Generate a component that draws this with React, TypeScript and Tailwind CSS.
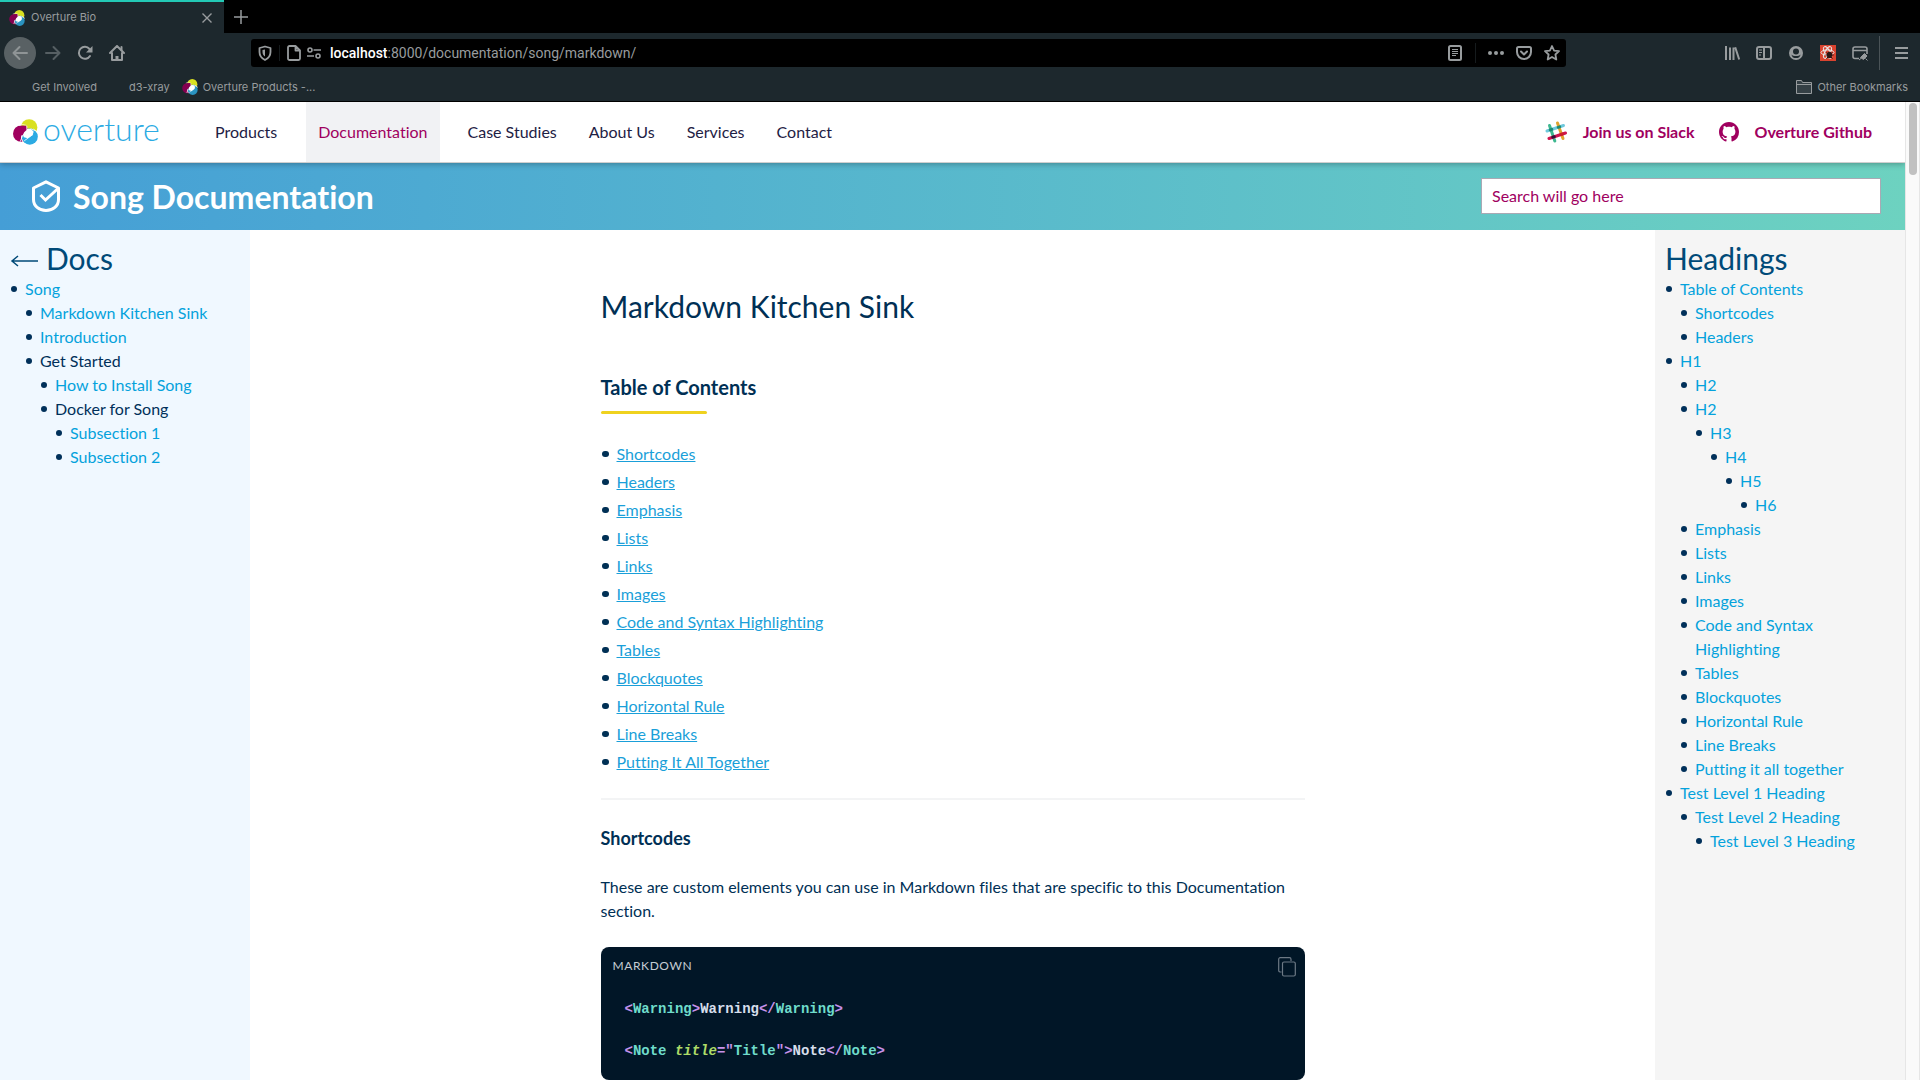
import React from "react";

type Node = { label: string; link?: boolean; children?: Node[] };

const docsTree: Node[] = [
  {
    label: "Song",
    link: true,
    children: [
      { label: "Markdown Kitchen Sink", link: true },
      { label: "Introduction", link: true },
      {
        label: "Get Started",
        children: [
          { label: "How to Install Song", link: true },
          {
            label: "Docker for Song",
            children: [
              { label: "Subsection 1", link: true },
              { label: "Subsection 2", link: true },
            ],
          },
        ],
      },
    ],
  },
];

const leaf = (label: string): Node => ({ label, link: true });
const branch = (label: string, children: Node[]): Node => ({ label, link: true, children });

const headingsTree: Node[] = [
  branch("Table of Contents", [leaf("Shortcodes"), leaf("Headers")]),
  branch("H1", [
    leaf("H2"),
    branch("H2", [branch("H3", [branch("H4", [branch("H5", [leaf("H6")])])])]),
    leaf("Emphasis"),
    leaf("Lists"),
    leaf("Links"),
    leaf("Images"),
    leaf("Code and Syntax Highlighting"),
    leaf("Tables"),
    leaf("Blockquotes"),
    leaf("Horizontal Rule"),
    leaf("Line Breaks"),
    leaf("Putting it all together"),
  ]),
  branch("Test Level 1 Heading", [branch("Test Level 2 Heading", [leaf("Test Level 3 Heading")])]),
];

const contents = [
  "Shortcodes",
  "Headers",
  "Emphasis",
  "Lists",
  "Links",
  "Images",
  "Code and Syntax Highlighting",
  "Tables",
  "Blockquotes",
  "Horizontal Rule",
  "Line Breaks",
  "Putting It All Together",
];

function Tree({ nodes }: { nodes: Node[] }) {
  return (
    <ul className="text-base leading-6">
      {nodes.map((n, i) => (
        <li
          key={i}
          className="flex before:mt-[9px] before:mr-2 before:ml-px before:h-1.5 before:w-1.5 before:shrink-0 before:rounded-full before:bg-[#00305a]"
        >
          <div>
            {n.link ? (
              <a href="#" className="text-[#04a2dc]">
                {n.label}
              </a>
            ) : (
              n.label
            )}
            {n.children && <Tree nodes={n.children} />}
          </div>
        </li>
      ))}
    </ul>
  );
}

function OvertureMark({ className, dim }: { className: string; dim?: boolean }) {
  const blue = dim ? "#2a93c0" : "#2cabe3";
  const red = dim ? "#85004f" : "#a0005f";
  return (
    <svg viewBox="0 0 76 78" className={className} aria-hidden="true">
      <circle cx="49" cy="25" r="25" fill="#d9e021" />
      <circle cx="25" cy="44" r="25" fill={red} />
      <circle cx="51" cy="53" r="24.500" fill={blue} />
      <path d="M41 19 A27 27 0 0 0 18 19" stroke="#fff" strokeWidth="2" fill="none" />
      <path d="M30 69 A26 26 0 0 1 27 46" stroke="#fff" strokeWidth="3" fill="none" />
      <path d="M62 30 A26 26 0 0 1 76 44" stroke="#fff" strokeWidth="2" fill="none" />
      <path d="M36 30 L54 29 L63 38 L59 49 L45 58 L33 55 L29 44 Z" fill="#fff" />
      <path d="M41 20 L42 32 L34 40 L28 52 L20 42 L30 20 Z" fill={red} />
      <path d="M42 20 L42 32 M30 48 L22 68 M34 66 L61 46 M54 29 L74 38" stroke="#fff" strokeWidth="2.500" fill="none" />
    </svg>
  );
}

function Chrome() {
  return (
    <header className="shrink-0 border-b border-black bg-[#1d282d] font-['Inter',sans-serif] text-[#989c9e]">
      <div className="flex h-[33px] bg-black">
        <div className="flex w-56 items-center gap-1.5 border-t-2 border-[#23c9b5] bg-[#1d282d] px-[9px] text-[11px]">
          <OvertureMark className="h-4 w-4" dim />
          <span className="flex-1">Overture Bio</span>
          <button aria-label="Close tab" className="mr-[3px]">
            <svg viewBox="0 0 10 10" className="h-2.5 w-2.5" stroke="currentColor" strokeWidth="1.4">
              <path d="M0.5 0.5 9.5 9.5M9.5 0.5 0.5 9.5" />
            </svg>
          </button>
        </div>
        <button aria-label="New tab" className="ml-2.5 flex items-center">
          <svg viewBox="0 0 14 14" className="h-3.5 w-3.5" stroke="currentColor" strokeWidth="1.5">
            <path d="M7 0v14M0 7h14" />
          </svg>
        </button>
      </div>

      <div className="flex h-10 items-center">
        <div className="flex w-[251px] items-center pl-1">
          <button aria-label="Back" className="flex h-8 w-8 items-center justify-center rounded-full bg-[#596164] text-[#8f9496]">
            <svg viewBox="0 0 16 16" className="h-4 w-4" fill="none" stroke="currentColor" strokeWidth="2" strokeLinecap="round" strokeLinejoin="round">
              <path d="M15 8H1.5M7.5 2 1.5 8l6 6" />
            </svg>
          </button>
          <button aria-label="Forward" className="ml-[9px] text-[#565f63]">
            <svg viewBox="0 0 16 16" className="h-4 w-4" fill="none" stroke="currentColor" strokeWidth="2" strokeLinecap="round" strokeLinejoin="round">
              <path d="M1 8h13.5M8.500 2l6 6-6 6" />
            </svg>
          </button>
          <button aria-label="Reload" className="ml-4">
            <svg viewBox="0 0 16 16" className="h-4 w-4" fill="none" stroke="currentColor" strokeWidth="2">
              <path d="M13 11A6 6 0 1 1 12.500 4" strokeLinecap="round" />
              <path d="M15.500 1v6.500H9z" fill="currentColor" stroke="none" />
            </svg>
          </button>
          <button aria-label="Home" className="ml-4">
            <svg viewBox="0 0 16 16" className="h-4 w-4" fill="none" stroke="currentColor" strokeWidth="2" strokeLinecap="round" strokeLinejoin="round">
              <path d="M1 8 8 1l7 7M3 8v7h10V8" />
              <path d="M8 15v-4" strokeWidth="3" strokeLinecap="butt" />
              <path d="M12.500 2v3" />
            </svg>
          </button>
        </div>

        <div className="flex h-7 w-[1315px] items-center rounded-[3px] bg-black">
          <button aria-label="Tracking protection" className="ml-1 flex w-[25px] justify-center border-r border-[#161b1d] pr-1">
            <svg viewBox="0 0 16 16" className="h-4 w-4 shrink-0" fill="none" stroke="currentColor" strokeWidth="1.800" strokeLinejoin="round">
              <path d="M8 1.500 13.500 3v4c0 4-2.500 6.500-5.500 8C5 13.500 2.500 11 2.500 7V3z" />
              <path d="M8 4.500v7C6.500 10.500 5.500 9 5.500 7V5z" fill="currentColor" stroke="none" />
            </svg>
          </button>
          <svg viewBox="0 0 14 16" className="ml-[7px] h-4 w-3.5" fill="none" stroke="currentColor" strokeWidth="1.800" strokeLinejoin="round">
            <path d="M2.500 1h6L13 5.500v8A1.500 1.500 0 0 1 11.500 15h-9A1.500 1.500 0 0 1 1 13.500v-11A1.500 1.500 0 0 1 2.500 1zM8.500 1v4.500H13" />
          </svg>
          <svg viewBox="0 0 14 12" className="ml-1.5 h-3 w-3.5" fill="none" stroke="currentColor" strokeWidth="1.600">
            <circle cx="3" cy="3" r="2" />
            <circle cx="11" cy="9" r="2" />
            <path d="M6.500 3H14M0 9h7" />
          </svg>
          <div className="ml-[9px] flex-1 pt-px font-['Roboto',sans-serif] text-[14px]">
            <span className="font-medium text-white">localhost</span>:8000/documentation/song/markdown/
          </div>
          <button aria-label="Reader view">
            <svg viewBox="0 0 14 16" className="h-4 w-3.5" fill="none" stroke="currentColor">
              <rect x="1" y="1" width="12" height="14" rx="1.500" strokeWidth="2" />
              <path d="M4 4.500h6M4 6.500h6M4 8.500h6M4 10.500h4" />
            </svg>
          </button>
          <span className="ml-[13px] h-5 w-px bg-[#161b1d]" />
          <button aria-label="Page actions" className="ml-3">
            <svg viewBox="0 0 16 4" className="h-1 w-4" fill="currentColor">
              <circle cx="2" cy="2" r="2" />
              <circle cx="8" cy="2" r="2" />
              <circle cx="14" cy="2" r="2" />
            </svg>
          </button>
          <button aria-label="Save to Pocket" className="ml-3">
            <svg viewBox="0 0 16 16" className="h-4 w-4" fill="none" stroke="currentColor" strokeWidth="2" strokeLinecap="round" strokeLinejoin="round">
              <path d="M2.500 2h11A1.500 1.500 0 0 1 15 3.500V7A7 7 0 0 1 1 7V3.500A1.500 1.500 0 0 1 2.500 2z" />
              <path d="M5 6.500l3 3 3-3" />
            </svg>
          </button>
          <button aria-label="Bookmark this page" className="mr-1.5 ml-3">
            <svg viewBox="0 0 16 16" className="h-4 w-4" fill="none" stroke="currentColor" strokeWidth="1.800" strokeLinejoin="round">
              <path d="M8 1l2.100 4.600 4.900.6-3.600 3.300.9 5L8 12 3.700 14.500l.9-5L1 6.200l4.900-.6z" />
            </svg>
          </button>
        </div>

        <div className="flex flex-1 items-center justify-end gap-4 pr-3">
          <button aria-label="Library">
            <svg viewBox="0 0 16 16" className="h-4 w-4" fill="none" stroke="currentColor" strokeWidth="2">
              <path d="M2 1v14M6 2.500v12.500M9.500 2.500v12.500M11.200 2.200l4 12.300" />
            </svg>
          </button>
          <button aria-label="Sidebars">
            <svg viewBox="0 0 16 16" className="h-4 w-4" fill="none" stroke="currentColor" strokeWidth="2">
              <rect x="1" y="2" width="14" height="12" rx="2" />
              <path d="M8 2v12" />
              <path d="M3 5h3M3 7.500h3M3 10h2" strokeWidth="1" />
            </svg>
          </button>
          <button aria-label="Account">
            <svg viewBox="0 0 16 16" className="h-4 w-4">
              <circle cx="8" cy="8" r="7" fill="currentColor" />
              <circle cx="8" cy="6.500" r="3" fill="#1d282d" />
              <path d="M3.500 9.500C5 11.500 11 11.500 12.500 9.500 12 12.500 10 13 8 13s-4-.5-4.500-3.500z" fill="#1d282d" />
            </svg>
          </button>
          <button aria-label="React developer tools">
            <svg viewBox="0 0 16 16" className="h-4 w-4" fill="none">
              <path d="M0 0h16v16H0z" fill="#d9432f" />
              <g stroke="#e8e8e8" strokeWidth="1">
                <ellipse cx="7.500" cy="7.500" rx="6.500" ry="2.600" />
                <ellipse cx="7.500" cy="7.500" rx="6.500" ry="2.600" transform="rotate(60 7.500 7.500)" />
                <ellipse cx="7.500" cy="7.500" rx="6.500" ry="2.600" transform="rotate(120 7.500 7.500)" />
              </g>
              <ellipse cx="9.500" cy="10" rx="2.600" ry="3.200" fill="#2a1512" />
              <path d="M5.500 10h8M6.500 13.500l6-6M6.500 7.500l6 6" stroke="#2a1512" />
            </svg>
          </button>
          <button aria-label="Accessibility tools">
            <svg viewBox="0 0 16 16" className="h-4 w-4" fill="none" stroke="currentColor" strokeWidth="1.600">
              <path d="M7 13.500H3A2 2 0 0 1 1 11.500V4a2 2 0 0 1 2-2h10a2 2 0 0 1 2 2v5M1 5.500h14" />
              <path d="M8.500 12.500 12.500 8.500 15 11l-3.500 3.500zM7 15l2.500-2M13.500 13.500 15.500 15.500" fill="currentColor" strokeWidth="1" />
            </svg>
          </button>
          <button aria-label="Open menu" className="-ml-[5px] flex h-[34px] items-center border-l border-[#4a5357] pl-[15px]">
            <svg viewBox="0 0 13 12" className="h-3 w-[13px]" stroke="currentColor" strokeWidth="2">
              <path d="M0 1h13M0 6h13M0 11h13" />
            </svg>
          </button>
        </div>
      </div>

      <nav className="flex h-7 items-center pr-3 pl-8 text-[11px]" aria-label="Bookmarks">
        <a href="#">Get Involved</a>
        <a href="#" className="ml-8">d3-xray</a>
        <a href="#" className="ml-3 flex items-center gap-[5px]">
          <OvertureMark className="h-4 w-4" dim />
          Overture Products -...
        </a>
        <a href="#" className="ml-auto flex items-center gap-[5px]">
          <svg viewBox="0 0 16 14" className="h-3.5 w-4" fill="#354045" stroke="currentColor">
            <path d="M.5 13.500V.5h5l1 2h9v11zM.5 4.500h15" />
          </svg>
          Other Bookmarks
        </a>
      </nav>
    </header>
  );
}

function SlackMark() {
  return (
    <svg viewBox="0 0 22 22" className="h-[22px] w-[22px]" fill="none" strokeWidth="3" strokeLinecap="round" aria-hidden="true">
      <path d="M2 10 18.500 4.500" stroke="#6fc9dc" />
      <path d="M12.500 2 18 17.500" stroke="#e0a32e" />
      <path d="M4.500 4.500 9.800 20" stroke="#3eb890" />
      <path d="M4 17.500 20.500 12" stroke="#d0154f" />
      <path d="M5.200 8.900 6.800 8.400M13.200 6.300l1.500-.5" stroke="#1c8a76" />
      <path d="M7.800 16.200l1.500-.5" stroke="#361238" />
      <path d="M15.900 13.500l1.400-.4" stroke="#cc2027" />
    </svg>
  );
}

function GithubMark() {
  return (
    <svg viewBox="0 0 16 16" className="h-5 w-5" fill="currentColor" aria-hidden="true">
      <path d="M8 0C3.580 0 0 3.580 0 8c0 3.540 2.290 6.530 5.470 7.590.4.070.55-.17.55-.38 0-.19-.01-.82-.01-1.490-2.010.37-2.530-.49-2.690-.94-.09-.23-.48-.94-.82-1.130-.28-.15-.68-.52-.01-.53.63-.01 1.080.58 1.230.82.72 1.210 1.870.87 2.330.66.070-.52.28-.87.51-1.070-1.780-.2-3.640-.89-3.640-3.950 0-.87.31-1.590.82-2.150-.08-.2-.36-1.020.08-2.120 0 0 .67-.21 2.200.82.64-.18 1.320-.27 2-.27s1.360.09 2 .27c1.530-1.040 2.200-.82 2.200-.82.44 1.100.16 1.920.08 2.120.51.56.82 1.270.82 2.150 0 3.070-1.870 3.750-3.650 3.950.29.25.54.73.54 1.480 0 1.070-.01 1.930-.01 2.200 0 .21.15.46.55.38A8.010 8.010 0 0 0 16 8c0-4.420-3.580-8-8-8z" />
    </svg>
  );
}

function SiteNav() {
  return (
    <div className="relative z-10 flex h-[61px] items-stretch border-b border-[#cfcfcf] bg-white pr-[33px] text-base text-[#1e2144] shadow-[0_1px_6px_rgba(0,0,0,0.3)]">
      <a href="#" className="flex w-[203px] items-center pl-[13px]" aria-label="Overture home">
        <OvertureMark className="h-[26px] w-[25px]" />
        <span className="ml-[5px] pb-1.5 text-[32px] leading-8 font-light text-[#2cabe3]">overture</span>
      </a>
      <nav className="flex items-stretch gap-2">
        <a href="#" className="flex items-center px-3">Products</a>
        <a href="#" className="mr-2 ml-[9px] flex items-center bg-[#f1f2f4] px-3 text-[#a0005f]">Documentation</a>
        <a href="#" className="flex items-center px-3">Case Studies</a>
        <a href="#" className="flex items-center px-3">About Us</a>
        <a href="#" className="flex items-center px-3">Services</a>
        <a href="#" className="flex items-center px-3">Contact</a>
      </nav>
      <div className="ml-auto flex items-center gap-6 font-bold text-[#a0005f]">
        <a href="#" className="flex items-center gap-4">
          <SlackMark />
          Join us on Slack
        </a>
        <a href="#" className="flex items-center gap-4">
          <GithubMark />
          Overture Github
        </a>
      </div>
    </div>
  );
}

function Banner() {
  return (
    <div className="flex h-[68px] items-center justify-between bg-linear-to-r from-[#459ed6] to-[#6dd2c0] pr-6 pb-px pl-8">
      <div className="flex items-center gap-[13px]">
        <svg viewBox="0 0 28 32" className="h-8 w-7" fill="none" stroke="#fff" strokeWidth="3" aria-hidden="true">
          <path d="M14 1.800 26.500 8v11.500C26.500 26 21 30.500 14 30.500S1.500 26 1.500 19.500V8z" strokeLinejoin="round" />
          <path d="M8.500 15l5 5L26 8.500" />
        </svg>
        <div className="pt-0.5 text-[32px] leading-10 font-bold text-white">Song Documentation</div>
      </div>
      <input
        type="text"
        aria-label="Search"
        placeholder="Search will go here"
        className="h-9 w-[400px] border border-[#a9a9b4] bg-white px-2.5 text-base text-[#a0005f] placeholder:text-[#a0005f]"
      />
    </div>
  );
}

const P = ({ children }: { children: React.ReactNode }) => <span className="text-[#c792ea]">{children}</span>;
const T = ({ children }: { children: React.ReactNode }) => <span className="text-[#6fdccb]">{children}</span>;

function CodeBlock() {
  return (
    <div className="mt-6 rounded-lg bg-[#011627] pb-[18px]">
      <div className="flex items-start justify-between pt-[9px] pr-[9px] pl-3">
        <span className="text-[12px] leading-5 tracking-wider text-[#c5ccd3]">MARKDOWN</span>
        <button aria-label="Copy code" className="pt-px">
          <svg viewBox="0 0 18 20" className="h-5 w-[18px]" fill="none" stroke="#6d7985" strokeWidth="1.200">
            <path d="M3.500 15H2A1.500 1.500 0 0 1 .7 13.500V2.200A1.500 1.500 0 0 1 2.200.7h9.300A1.500 1.500 0 0 1 13 2.200V4" />
            <rect x="4.500" y="5" width="12.800" height="14" rx="1.500" />
          </svg>
        </button>
      </div>
      <pre className="mt-[22px] px-6 font-['Liberation_Mono',monospace] text-[14px] leading-[21px] font-bold text-[#d6deeb]">
        <P>&lt;</P><T>Warning</T><P>&gt;</P>Warning<P>&lt;/</P><T>Warning</T><P>&gt;</P>
        {"\n\n"}
        <P>&lt;</P><T>Note </T><span className="text-[#addb67] italic">title</span><P>="</P><T>Title</T><P>"&gt;</P>Note<P>&lt;/</P><T>Note</T><P>&gt;</P>
      </pre>
    </div>
  );
}

function Article() {
  return (
    <main className="flex-1 px-6 pt-14 text-[#003055]">
      <article className="mx-auto max-w-[704px]">
        <h1 className="text-[30px] leading-10">Markdown Kitchen Sink</h1>
        <h2 className="mt-[47px] text-xl leading-7 font-bold">Table of Contents</h2>
        <div className="mt-2.5 h-[3px] w-[106px] rounded-sm bg-[#efd21f]" />
        <ul className="mt-[26px] text-base leading-7">
          {contents.map((c) => (
            <li
              key={c}
              className="flex before:mt-[11px] before:mr-2 before:ml-px before:h-1.5 before:w-[7px] before:shrink-0 before:rounded-full before:bg-[#003055]"
            >
              <a href="#" className="text-[#1a9fd9] underline">
                {c}
              </a>
            </li>
          ))}
        </ul>
        <hr className="mt-[22px] border-t-2 border-[#f3f4f5]" />
        <h3 className="mt-6 text-lg leading-7 font-bold">Shortcodes</h3>
        <p className="mt-[23px] text-base leading-6">
          These are custom elements you can use in Markdown files that are specific to this Documentation section.
        </p>
        <CodeBlock />
      </article>
    </main>
  );
}

export default function App() {
  return (
    <div className="flex h-screen flex-col overflow-hidden bg-white font-['Lato',sans-serif] [font-variant-ligatures:no-common-ligatures]">
      <Chrome />
      <div className="flex min-h-0 flex-1">
        <div className="flex min-w-0 flex-1 flex-col overflow-hidden">
          <SiteNav />
          <Banner />
          <div className="flex flex-1 text-[#00305a]">
            <aside className="w-[250px] shrink-0 bg-[#f0f8ff] px-2.5 pt-[9px]">
              <h2 className="flex items-center gap-2 text-[30px] leading-[38px] text-[#004a78]">
                <svg viewBox="0 0 28 14" className="mt-1.5 h-3.5 w-7" fill="none" stroke="currentColor" strokeWidth="1.500" aria-hidden="true">
                  <path d="M28 7H2M8 2 2 7l6 5" />
                </svg>
                Docs
              </h2>
              <Tree nodes={docsTree} />
            </aside>
            <Article />
            <aside className="w-[250px] shrink-0 bg-[#f5f5f5] px-2.5 pt-[9px]">
              <h2 className="text-[30px] leading-[38px] text-[#004a78]">Headings</h2>
              <Tree nodes={headingsTree} />
            </aside>
          </div>
        </div>
        <div className="flex w-[15px] shrink-0 justify-center border-x border-[#e6e6e6] bg-[#fafafa] pt-px">
          <div className="h-[72px] w-2 rounded-full bg-[#c1c1c1]" />
        </div>
      </div>
    </div>
  );
}
